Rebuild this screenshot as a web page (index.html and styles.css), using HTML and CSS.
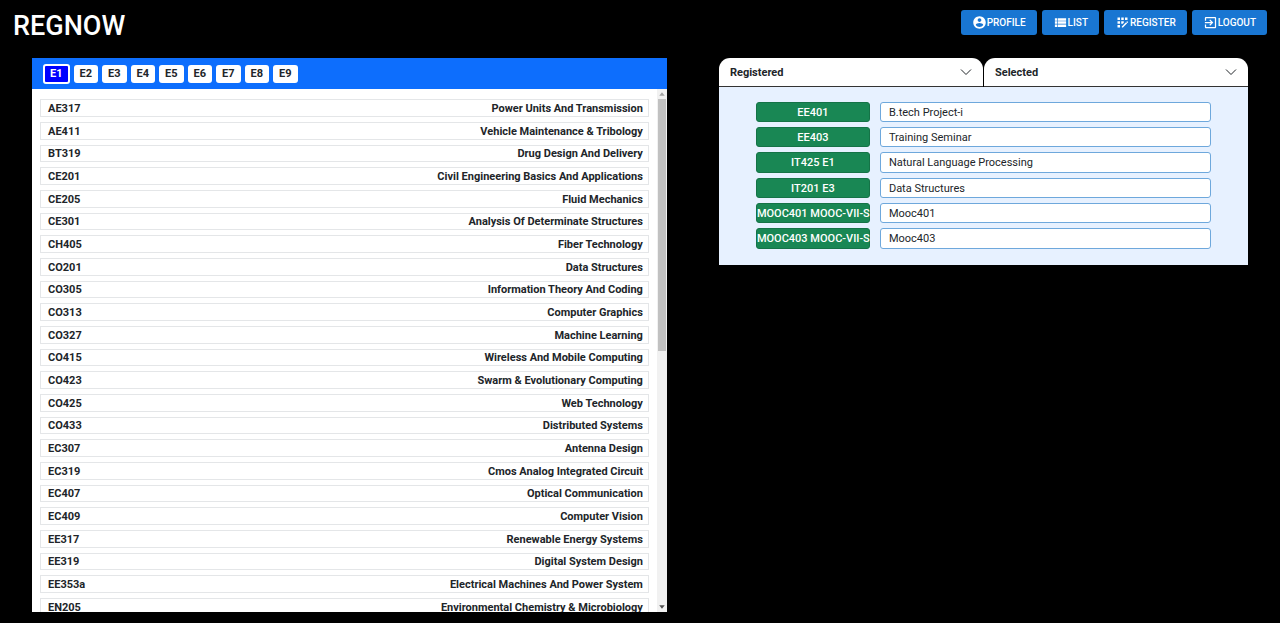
FILE: index.html
```html
<!DOCTYPE html>
<html lang="en">
<head>
<meta charset="utf-8">
<meta name="viewport" content="width=device-width, initial-scale=1">
<title>REGNOW</title>
<link rel="stylesheet" href="styles.css">
</head>
<body>
<header class="topbar">
  <h1 class="brand">REGNOW</h1>
  <nav class="actions">
    <button class="action" type="button"><svg class="icon" viewBox="0 0 24 24"><path d="M12 2C6.48 2 2 6.48 2 12s4.48 10 10 10 10-4.480 10-10S17.520 2 12 2zm0 3c1.660 0 3 1.340 3 3s-1.340 3-3 3-3-1.340-3-3 1.340-3 3-3zm0 14.200c-2.500 0-4.710-1.280-6-3.220.03-1.990 4-3.080 6-3.080 1.990 0 5.970 1.090 6 3.080-1.290 1.940-3.500 3.220-6 3.220z"/></svg>PROFILE</button>
    <button class="action" type="button"><svg class="icon" viewBox="0 0 24 24"><path d="M3 14h4v-4H3v4zm0 5h4v-4H3v4zM3 9h4V5H3v4zm5 5h13v-4H8v4zm0 5h13v-4H8v4zM8 5v4h13V5H8z"/></svg>LIST</button>
    <button class="action" type="button"><svg class="icon" viewBox="0 0 24 24"><path d="M10 4h4v4h-4zM4 16h4v4H4zM4 10h4v4H4zM4 4h4v4H4zM14 12.420V10h-4v4h2.420zM20.880 11.290l-1.170-1.170c-.16-.16-.42-.16-.58 0l-.88.88L20 12.750l.88-.88c.16-.16.16-.42 0-.58zM11 18.250V20h1.750l6.670-6.670-1.750-1.750zM16 4h4v4h-4z"/></svg>REGISTER</button>
    <button class="action" type="button"><svg class="icon" viewBox="0 0 24 24"><path d="M10.090 15.590L11.500 17l5-5-5-5-1.410 1.410L12.670 11H3v2h9.670l-2.580 2.590zM19 3H5c-1.110 0-2 .9-2 2v4h2V5h14v14H5v-4H3v4c0 1.100.89 2 2 2h14c1.100 0 2-.9 2-2V5c0-1.100-.9-2-2-2z"/></svg>LOGOUT</button>
  </nav>
</header>
<main class="layout">
  <section class="catalog">
    <div class="groups">
      <button class="group group-active" type="button">E1</button>
      <button class="group" type="button">E2</button>
      <button class="group" type="button">E3</button>
      <button class="group" type="button">E4</button>
      <button class="group" type="button">E5</button>
      <button class="group" type="button">E6</button>
      <button class="group" type="button">E7</button>
      <button class="group" type="button">E8</button>
      <button class="group" type="button">E9</button>
    </div>
    <div class="scroller">
      <ul class="courses">
        <li class="course"><span>AE317</span><span>Power Units And Transmission</span></li>
        <li class="course"><span>AE411</span><span>Vehicle Maintenance &amp; Tribology</span></li>
        <li class="course"><span>BT319</span><span>Drug Design And Delivery</span></li>
        <li class="course"><span>CE201</span><span>Civil Engineering Basics And Applications</span></li>
        <li class="course"><span>CE205</span><span>Fluid Mechanics</span></li>
        <li class="course"><span>CE301</span><span>Analysis Of Determinate Structures</span></li>
        <li class="course"><span>CH405</span><span>Fiber Technology</span></li>
        <li class="course"><span>CO201</span><span>Data Structures</span></li>
        <li class="course"><span>CO305</span><span>Information Theory And Coding</span></li>
        <li class="course"><span>CO313</span><span>Computer Graphics</span></li>
        <li class="course"><span>CO327</span><span>Machine Learning</span></li>
        <li class="course"><span>CO415</span><span>Wireless And Mobile Computing</span></li>
        <li class="course"><span>CO423</span><span>Swarm &amp; Evolutionary Computing</span></li>
        <li class="course"><span>CO425</span><span>Web Technology</span></li>
        <li class="course"><span>CO433</span><span>Distributed Systems</span></li>
        <li class="course"><span>EC307</span><span>Antenna Design</span></li>
        <li class="course"><span>EC319</span><span>Cmos Analog Integrated Circuit</span></li>
        <li class="course"><span>EC407</span><span>Optical Communication</span></li>
        <li class="course"><span>EC409</span><span>Computer Vision</span></li>
        <li class="course"><span>EE317</span><span>Renewable Energy Systems</span></li>
        <li class="course"><span>EE319</span><span>Digital System Design</span></li>
        <li class="course"><span>EE353a</span><span>Electrical Machines And Power System</span></li>
        <li class="course"><span>EN205</span><span>Environmental Chemistry &amp; Microbiology</span></li>
      </ul>
      <div class="scrollbar" aria-hidden="true">
        <svg class="arrow arrow-up" viewBox="0 0 9 9"><path d="M2 6h5L4.500 3z"/></svg>
        <div class="track"><div class="thumb"></div></div>
        <svg class="arrow" viewBox="0 0 9 9"><path d="M2 3h5L4.500 6z"/></svg>
      </div>
    </div>
  </section>
  <section class="chosen">
    <div class="tabs">
      <button class="tab" type="button">Registered<svg class="chevron" viewBox="0 0 12 12"><path d="M1 3.500l5 5 5-5"/></svg></button>
      <button class="tab" type="button">Selected<svg class="chevron" viewBox="0 0 12 12"><path d="M1 3.500l5 5 5-5"/></svg></button>
    </div>
    <div class="entries">
      <span class="code">EE401</span><span class="title">B.tech Project-i</span>
      <span class="code">EE403</span><span class="title">Training Seminar</span>
      <span class="code">IT425 E1</span><span class="title">Natural Language Processing</span>
      <span class="code">IT201 E3</span><span class="title">Data Structures</span>
      <span class="code">MOOC401 MOOC-VII-S</span><span class="title">Mooc401</span>
      <span class="code">MOOC403 MOOC-VII-S</span><span class="title">Mooc403</span>
    </div>
  </section>
</main>
</body>
</html>
```
FILE: styles.css
```css
* {
  box-sizing: border-box;
}

body {
  display: flex;
  flex-direction: column;
  height: 100vh;
  margin: 0;
  background: #000;
  color: #212529;
  font-family: Roboto, sans-serif;
  font-size: 11px;
}

button {
  font: inherit;
  color: inherit;
  border: 0;
  cursor: pointer;
}

.topbar {
  display: flex;
  justify-content: space-between;
  align-items: flex-start;
  padding: 10px 13px 0;
  height: 58px;
  flex: none;
}

.brand {
  margin: 0;
  color: #fff;
  font-size: 27px;
  font-weight: 500;
  line-height: 32px;
}

.actions {
  display: flex;
  gap: 5px;
}

.action {
  display: flex;
  align-items: center;
  height: 25px;
  padding: 0 11px;
  border-radius: 3px;
  background: #1976d2;
  color: #fff;
  font-size: 10px;
  font-weight: 500;
}

.icon {
  width: 15px;
  height: 15px;
  fill: #fff;
}

.layout {
  display: grid;
  grid-template-columns: 6fr 5fr;
  gap: 52px;
  flex: 1;
  min-height: 0;
  padding: 0 32px 11px;
}

.catalog {
  display: flex;
  flex-direction: column;
  min-height: 0;
  background: #fff;
}

.groups {
  display: flex;
  align-items: center;
  gap: 4px;
  flex: none;
  height: 31px;
  padding: 0 11px;
  background: #0d6efd;
}

.group {
  height: 18px;
  padding: 0 6px;
  border-radius: 3px;
  background: #fff;
  font-weight: 700;
}

.group-active {
  height: 20px;
  padding: 0 5px;
  border: 2px solid #fff;
  background: #00f;
  color: #fff;
}

.scroller {
  display: flex;
  flex: 1;
  min-height: 0;
}

.courses {
  display: grid;
  grid-auto-rows: 18px 18px 17px;
  align-content: start;
  gap: 5px;
  flex: 1;
  margin: 0;
  padding: 10px 8px 0;
  overflow: hidden;
  list-style: none;
}

.course {
  display: flex;
  justify-content: space-between;
  align-items: center;
  padding: 0 5px 0 7px;
  border: 1px solid #e4e6e8;
  font-weight: 700;
}

.scrollbar {
  display: flex;
  flex-direction: column;
  width: 10px;
  background: #f1f1f1;
}

.arrow {
  flex: none;
  width: 10px;
  height: 10px;
  fill: #505050;
}

.arrow-up {
  fill: #a3a3a3;
}

.track {
  flex: 1;
}

.thumb {
  width: 8px;
  height: 50%;
  margin: 0 auto;
  background: #c1c1c1;
}

.tabs {
  display: grid;
  grid-template-columns: 1fr 1fr;
  gap: 1px;
}

.tab {
  display: flex;
  justify-content: space-between;
  align-items: center;
  height: 29px;
  padding: 0 11px;
  border-bottom: 1px solid #333;
  border-radius: 11px 11px 0 0;
  background: #fff;
  font-weight: 700;
}

.chevron {
  width: 12px;
  height: 12px;
  fill: none;
  stroke: #212529;
}

.entries {
  display: grid;
  grid-template-columns: 114px 1fr;
  grid-auto-rows: 20px 20px 21px;
  gap: 5px 10px;
  padding: 15px 37px 16px;
  background: #e7f1ff;
}

.code,
.title {
  border-radius: 3px;
  line-height: 19px;
  white-space: nowrap;
}

.code {
  border: 1px solid #157347;
  background: #198754;
  color: #fff;
  font-weight: 500;
  text-align: center;
}

.title {
  padding: 0 8px;
  border: 1px solid #6ea8dc;
  background: #fff;
}
```
